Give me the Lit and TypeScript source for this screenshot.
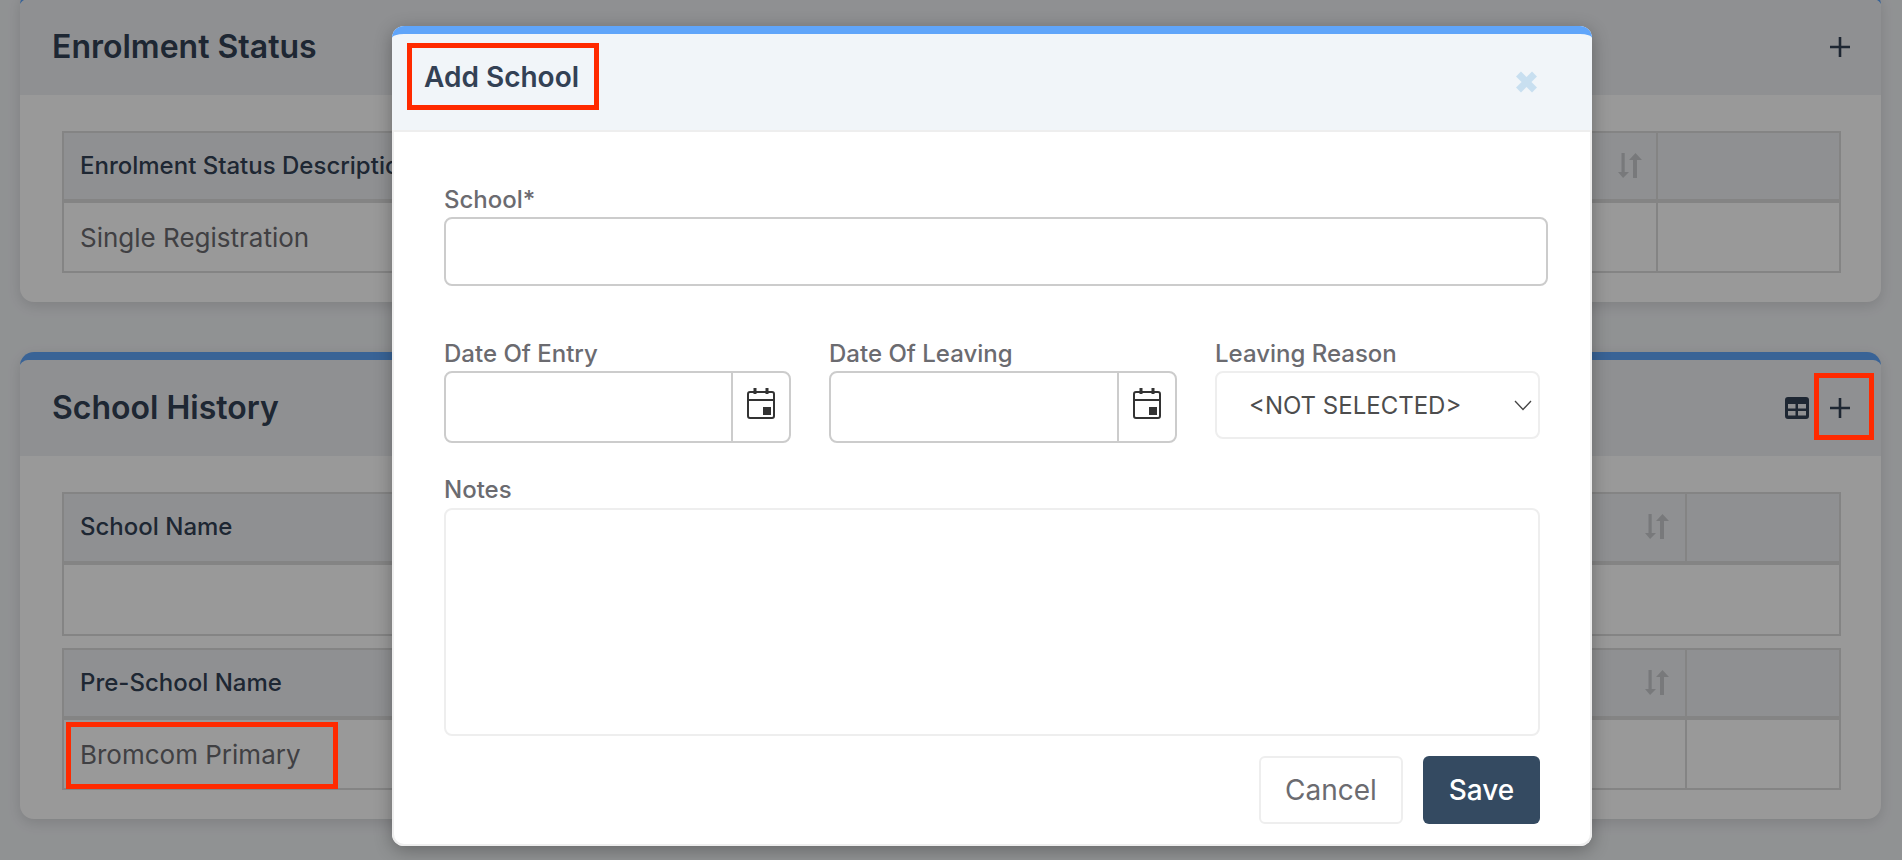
import { LitElement, html, css, svg } from "lit";
import { customElement } from "lit/decorators.js";

const sortIcon = html`<svg class="sort" viewBox="0 0 24 25" aria-hidden="true">
  <path d="M3.500 0h3.200v19H11L5.100 25 0 19h3.500z"/><path d="M15 25V7h-4l6.500-7L24 7h-5v18z"/>
</svg>`;

const plusIcon = html`<svg class="ico plus" viewBox="0 0 20 20" aria-hidden="true">
  <path d="M10 0v20M0 10h20" fill="none" stroke="currentColor" stroke-width="2.600"/>
</svg>`;

const tableIcon = html`<svg class="ico tbl" viewBox="0 0 24 22" aria-hidden="true">
  <path fill="currentColor" fill-rule="evenodd" d="M3 0h18a3 3 0 0 1 3 3v16a3 3 0 0 1-3 3H3a3 3 0 0 1-3-3V3a3 3 0 0 1 3-3zM3 7v4.500h7.500V7zM13 7v4.500h8V7zM3 14v4.500h7.500V14zM13 14v4.500h8V14z"/>
</svg>`;

const calIcon = svg`<rect x="1" y="4" width="26" height="26" rx="2" fill="none" stroke="currentColor" stroke-width="2"/>
  <path d="M1 12h26" stroke="currentColor" stroke-width="2"/>
  <rect x="6.500" y="0" width="3" height="6" fill="currentColor"/><rect x="18.500" y="0" width="3" height="6" fill="currentColor"/>
  <rect x="16" y="19" width="8" height="8" fill="currentColor"/>`;

@customElement("app-root")
export class AppRoot extends LitElement {
  static styles = css`
    :host {
      display: block;
      position: relative;
      height: 860px;
      overflow: hidden;
      background: #f1f3f6;
      font-family: Inter, "Noto Sans", sans-serif;
      color: #6b6b70;
    }
    .page {
      display: flex;
      flex-direction: column;
      gap: 50px;
      padding: 0 21px 0 20px;
      margin-top: -9px;
    }
    .card {
      background: #fff;
      border-top: 8px solid #60a5fa;
      border-radius: 14px;
      box-shadow: 0 4px 14px rgba(0, 0, 0, 0.12);
    }
    .card-head {
      height: 96px;
      box-sizing: border-box;
      display: flex;
      align-items: center;
      gap: 21px;
      padding: 0 31px 0 32px;
      background: #eff1f4;
      border-radius: 8px 8px 0 0;
      color: #334155;
    }
    .card-title {
      flex: 1;
      font-size: 32px;
      font-weight: 600;
      line-height: 38px;
    }
    .ico { display: block; flex: none; }
    .plus { width: 20px; height: 20px; }
    .tbl { width: 24px; height: 22px; }
    .card-body {
      display: flex;
      flex-direction: column;
      gap: 12px;
      padding: 36px 40px 29px 42px;
    }
    .table {
      border: 2px solid #ddd;
    }
    .row {
      display: grid;
      grid-template-columns: 1fr 183px;
    }
    .table.narrow .row { grid-template-columns: 1fr 154px; }
    .row.head {
      height: 66px;
      background: #eff1f4;
      border-bottom: 4px solid #ddd;
      box-sizing: content-box;
      color: #334155;
      font-size: 24px;
      font-weight: 500;
    }
    .row.head .cell { padding-bottom: 2px; }
    .row.data {
      height: 68px;
      font-size: 26px;
      line-height: 30px;
    }
    .row.data .cell { padding-top: 2px; }
    .table.tall .row.head { height: 67px; }
    .table.tall .row.data { height: 69px; display: block; }
    .cell {
      display: flex;
      align-items: center;
      justify-content: space-between;
      padding: 0 14px 0 16px;
      min-width: 0;
      white-space: nowrap;
    }
    .table.narrow .cell { padding-right: 16px; }
    .cell + .cell { border-left: 2px solid #ddd; }
    .sort { width: 24px; height: 25px; fill: #c8cace; flex: none; }
    .mark { position: relative; }
    .mark::after {
      content: "";
      position: absolute;
      border: 5px solid #ff2a00;
      z-index: 20;
      pointer-events: none;
    }
    .mark.primary::after { left: -14px; right: -37px; top: -18px; bottom: -19px; }
    .mark.plusbox::after { left: -16px; right: -24px; top: -25px; bottom: -22px; }
    .mark.titlebox::after { left: -17px; right: -20px; top: -19px; bottom: -18px; }
    .plusbtn { flex: none; }

    .overlay {
      position: absolute;
      inset: 0;
      z-index: 10;
      background: rgba(0, 0, 0, 0.4);
    }
    .modal {
      position: absolute;
      left: 392px;
      top: 26px;
      width: 1200px;
      height: 820px;
      box-sizing: border-box;
      display: flex;
      flex-direction: column;
      background: #fff;
      border-radius: 12px;
      box-shadow: 0 4px 18px rgba(0, 0, 0, 0.3);
    }
    .modal-head {
      flex: none;
      height: 106px;
      box-sizing: border-box;
      border-top: 8px solid #60a5fa;
      border-bottom: 2px solid #eee;
      border-radius: 12px 12px 0 0;
      background: #f1f5f9;
      display: flex;
      align-items: center;
      justify-content: space-between;
      padding: 0 54px 0 32px;
    }
    .modal-title {
      font-size: 28px;
      font-weight: 600;
      line-height: 30px;
      color: #334155;
      margin-bottom: 10px;
    }
    .close { width: 23px; height: 22px; display: block; }
    .modal-body {
      flex: 1;
      min-height: 0;
      display: flex;
      flex-direction: column;
      padding: 53px 50px 20px;
      border: 2px solid #eee;
      border-top: 0;
      border-radius: 0 0 12px 12px;
    }
    .label {
      display: block;
      font-size: 24px;
      font-weight: 500;
      line-height: 30px;
      color: #6b6b70;
    }
    .lab-gap { margin-bottom: 2px; }
    .control {
      box-sizing: border-box;
      display: block;
      background: #fff;
      outline: none;
      font-family: inherit;
      margin: 0;
    }
    .school {
      width: 1104px;
      height: 69px;
      border: 2px solid #ccc;
      border-radius: 8px;
    }
    .grid {
      display: grid;
      grid-template-columns: 347px 348px 325px;
      column-gap: 38px;
      align-items: start;
      margin-top: 53px;
    }
    .date {
      display: flex;
      height: 72px;
      box-sizing: border-box;
      border: 2px solid #ccc;
      border-radius: 8px;
    }
    .date input {
      flex: 1;
      min-width: 0;
      border: 0;
      background: transparent;
      outline: none;
    }
    .addon {
      flex: none;
      width: 56px;
      border-left: 2px solid #ccc;
      display: flex;
      align-items: center;
      justify-content: center;
      color: #333;
    }
    .addon svg { width: 28px; height: 31px; display: block; margin-top: -7px; }
    .select-wrap { position: relative; }
    .select {
      width: 100%;
      height: 68px;
      border: 2px solid #eee;
      border-radius: 8px;
      appearance: none;
      padding: 0 0 0 32px;
      font-size: 24px;
      color: #4d4d4d;
    }
    .chev {
      position: absolute;
      right: 8px;
      top: 29px;
      width: 18px;
      height: 11px;
      pointer-events: none;
    }
    .notes-lab { margin-top: 32px; margin-bottom: 3px; }
    .notes {
      width: 1096px;
      height: 228px;
      border: 2px solid #eee;
      border-radius: 8px;
      resize: none;
    }
    .actions {
      display: flex;
      justify-content: flex-end;
      gap: 20px;
      margin-top: 20px;
      width: 1096px;
    }
    .btn {
      height: 68px;
      box-sizing: border-box;
      font-family: inherit;
      font-size: 28px;
      border-radius: 6px;
    }
    .cancel {
      width: 144px;
      background: #fff;
      border: 2px solid #eee;
      color: #6b6b70;
    }
    .save {
      width: 117px;
      background: #344a61;
      border: 0;
      color: #fff;
      font-weight: 500;
    }
  `;

  render() {
    return html`
      <div class="page">
        <section class="card">
          <div class="card-head">
            <div class="card-title">Enrolment Status</div>
            <div class="plusbtn">${plusIcon}</div>
          </div>
          <div class="card-body">
            <div class="table">
              <div class="row head">
                <div class="cell"><span>Enrolment Status Description</span>${sortIcon}</div>
                <div class="cell"></div>
              </div>
              <div class="row data">
                <div class="cell">Single Registration</div>
                <div class="cell"></div>
              </div>
            </div>
          </div>
        </section>
        <section class="card">
          <div class="card-head">
            <div class="card-title">School History</div>
            ${tableIcon}
            <div class="plusbtn mark plusbox">${plusIcon}</div>
          </div>
          <div class="card-body">
            <div class="table narrow tall">
              <div class="row head">
                <div class="cell"><span>School Name</span>${sortIcon}</div>
                <div class="cell"></div>
              </div>
              <div class="row data"></div>
            </div>
            <div class="table narrow">
              <div class="row head">
                <div class="cell"><span>Pre-School Name</span>${sortIcon}</div>
                <div class="cell"></div>
              </div>
              <div class="row data">
                <div class="cell"><span class="mark primary">Bromcom Primary</span></div>
                <div class="cell"></div>
              </div>
            </div>
          </div>
        </section>
      </div>

      <div class="overlay">
        <div class="modal">
          <header class="modal-head">
            <div class="modal-title mark titlebox">Add School</div>
            <svg class="close" viewBox="0 0 23 22" aria-hidden="true">
              <path d="M3.500 3l16 16M19.500 3l-16 16" stroke="#c8dff0" stroke-width="7" fill="none"/>
            </svg>
          </header>
          <div class="modal-body">
            <label class="label lab-gap">School*</label>
            <input class="control school" />
            <div class="grid">
              <div>
                <label class="label lab-gap">Date Of Entry</label>
                <div class="date"><input /><span class="addon"><svg viewBox="0 0 28 31">${calIcon}</svg></span></div>
              </div>
              <div>
                <label class="label lab-gap">Date Of Leaving</label>
                <div class="date"><input /><span class="addon"><svg viewBox="0 0 28 31">${calIcon}</svg></span></div>
              </div>
              <div>
                <label class="label lab-gap">Leaving Reason</label>
                <div class="select-wrap">
                  <select class="control select"><option>&lt;NOT SELECTED&gt;</option></select>
                  <svg class="chev" viewBox="0 0 18 11" aria-hidden="true">
                    <path d="M1 1l8 8.500L17 1" fill="none" stroke="#444" stroke-width="1.300"/>
                  </svg>
                </div>
              </div>
            </div>
            <label class="label notes-lab">Notes</label>
            <textarea class="control notes"></textarea>
            <div class="actions">
              <button class="btn cancel">Cancel</button>
              <button class="btn save">Save</button>
            </div>
          </div>
        </div>
      </div>
    `;
  }
}
